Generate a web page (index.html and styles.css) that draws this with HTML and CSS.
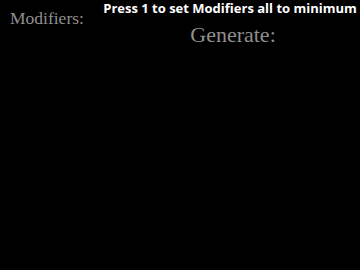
FILE: index.html
```html
<!DOCTYPE html>
<html lang="en">
<head>
    <meta charset="UTF-8">
    <meta name="viewport" content="width=device-width, initial-scale=1.0">
    <title>Generator</title>
    <link rel="stylesheet" href="styles.css">
</head>
<body>
    <div class="layout">
        <div class="modifiers">
            <h2 class="label">Modifiers:</h2>
        </div>
        <div class="main">
            <p class="hint">Press 1 to set Modifiers all to minimum</p>
            <h2 class="label generate">Generate:</h2>
        </div>
    </div>
</body>
</html>
```

FILE: styles.css
```css
* {
    margin: 0;
    padding: 0;
    box-sizing: border-box;
}

body {
    background-color: #000;
    min-height: 100vh;
}

.layout {
    display: flex;
}

.modifiers {
    width: 100px;
    padding: 8px 0 0 10px;
}

.main {
    flex: 1;
    display: flex;
    flex-direction: column;
    align-items: center;
}

.label {
    font-family: 'Liberation Serif', serif;
    font-weight: normal;
    color: #8f8f8f;
    font-size: 17.5px;
}

.hint {
    font-family: 'Open Sans', sans-serif;
    font-weight: 700;
    font-size: 13px;
    color: #fff;
    line-height: 16px;
}

.generate {
    font-size: 22px;
    margin-top: 6px;
    margin-left: 6px;
}
```
